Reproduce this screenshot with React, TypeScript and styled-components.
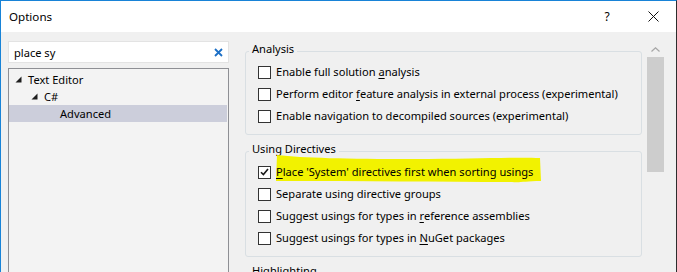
import styled, { createGlobalStyle } from 'styled-components';

const GlobalStyle = createGlobalStyle`
  html, body {
    margin: 0;
    padding: 0;
    background: #f0f0f0;
    overflow: hidden;
  }
  body {
    font-family: 'Segoe UI', 'Noto Sans', sans-serif;
    font-size: 11.1px;
    color: #000;
  }
`;

const Window = styled.div`
  width: 677px;
  height: 272px;
  box-sizing: border-box;
  border-left: 1px solid #1883d7;
  border-top: 1px solid #1883d7;
  border-right: 1px solid #2d2d2d;
  display: flex;
  flex-direction: column;
  overflow: hidden;
  background: #f0f0f0;
`;

const TitleBar = styled.div`
  height: 31px;
  flex: none;
  background: #fff;
  display: flex;
  align-items: center;
  padding-left: 8px;
`;

const Title = styled.span`
  flex: 1;
  line-height: 16px;
  font-size: 11.6px;
`;

const CaptionButton = styled.div`
  width: 46px;
  height: 31px;
  display: flex;
  align-items: center;
  justify-content: center;
  font-size: 12px;
`;

const Body = styled.div`
  flex: 1;
  display: flex;
  min-height: 0;
`;

const Sidebar = styled.div`
  width: 221px;
  margin-left: 7px;
  padding-top: 9px;
  display: flex;
  flex-direction: column;
`;

const SearchBox = styled.div`
  height: 22px;
  box-sizing: border-box;
  border: 1px solid #e3e3e3;
  background: #fff;
  display: flex;
  align-items: center;
  justify-content: space-between;
  padding: 0 5px 0 5px;
  flex: none;
`;

const Tree = styled.div`
  flex: 1;
  margin-top: 5px;
  border: 1px solid #8e8f94;
  border-bottom: none;
  background: #f3f3f3;
  padding-top: 2px;
`;

const TreeRow = styled.div<{ $level: number; $selected?: boolean }>`
  height: 17px;
  display: flex;
  align-items: center;
  margin-right: 1px;
  padding-left: ${(p) => 6 + p.$level * 16}px;
  background: ${(p) => (p.$selected ? '#cccedb' : 'transparent')};
`;

const Expander = styled.svg`
  width: 7px;
  height: 7px;
  margin-right: 6px;
  flex: none;
`;

const Content = styled.div`
  width: 397px;
  margin-left: 16px;
  padding-top: 9px;
  display: flex;
  flex-direction: column;
`;

const Group = styled.fieldset`
  margin: 0;
  padding: 0 12px 7px;
  border: 1px solid #d9dfe3;
  border-radius: 3px;
  min-inline-size: 0;
  & + & {
    margin-top: 6px;
  }
`;

const Legend = styled.legend`
  margin-left: -9px;
  padding: 0 3px 4px;
  line-height: 16px;
`;

const Option = styled.div`
  height: 22px;
  display: flex;
  align-items: center;
`;

const Checkbox = styled.span`
  width: 13px;
  height: 13px;
  box-sizing: border-box;
  border: 1px solid #333;
  background: #fff;
  flex: none;
  margin-right: 5px;
  display: flex;
  align-items: center;
  justify-content: center;
`;

const Label = styled.span`
  position: relative;
  line-height: 16px;
  white-space: nowrap;
`;

const LabelText = styled.span`
  position: relative;
`;

const Marker = styled.svg`
  position: absolute;
  left: -2px;
  top: -9px;
  width: 268px;
  height: 29px;
`;

const Key = styled.u`
  text-decoration-thickness: 1px;
  text-underline-offset: 2px;
`;

const Scrollbar = styled.div`
  width: 17px;
  margin-left: 5px;
  padding-top: 9px;
  display: flex;
  flex-direction: column;
`;

const ArrowButton = styled.div`
  height: 16px;
  display: flex;
  align-items: center;
  justify-content: center;
`;

const Thumb = styled.div`
  height: 115px;
  background: #cdcdcd;
`;

const Check = () => (
  <svg width="9" height="8" viewBox="0 0 9 8">
    <path d="M1 4.2 L3.4 6.6 L8 1" fill="none" stroke="#1a1a1a" strokeWidth="1.6" />
  </svg>
);

type OptionItem = { label: React.ReactNode; checked?: boolean; marked?: boolean };

const OptionRow = ({ label, checked, marked }: OptionItem) => (
  <Option>
    <Checkbox>{checked && <Check />}</Checkbox>
    <Label>
      {marked && (
        <Marker viewBox="0 0 268 29">
          <path
            d="M3 0 C30 3 70 4 140 4 C200 4 240 2 266 3 L267 26 C250 26 246 28 238 27 C170 27 90 26 2 26 Z"
            fill="#f2f200"
          />
        </Marker>
      )}
      <LabelText>{label}</LabelText>
    </Label>
  </Option>
);

const analysis: OptionItem[] = [
  { label: <>Enable full solution <Key>a</Key>nalysis</> },
  { label: <>Perform editor <Key>f</Key>eature analysis in external process (experimental)</> },
  { label: <>Enable navigation to decompiled sources (experimental)</> },
];

const usings: OptionItem[] = [
  { label: <><Key>P</Key>lace 'System' directives first when sorting usings</>, checked: true, marked: true },
  { label: <>Separate using directive groups</> },
  { label: <>Suggest usings for types in <Key>r</Key>eference assemblies</> },
  { label: <>Suggest usings for types in <Key>N</Key>uGet packages</> },
];

const ExpandedIcon = () => (
  <Expander viewBox="0 0 7 7">
    <polygon points="6.5,0.5 6.5,6.5 0.5,6.5" fill="#1e1e1e" />
  </Expander>
);

export default function App() {
  return (
    <>
      <GlobalStyle />
      <Window>
        <TitleBar>
          <Title>Options</Title>
          <CaptionButton>?</CaptionButton>
          <CaptionButton>
            <svg width="11" height="11" viewBox="0 0 11 11">
              <path d="M0.5 0.5 L10.5 10.5 M10.5 0.5 L0.5 10.5" stroke="#111" strokeWidth="1" />
            </svg>
          </CaptionButton>
        </TitleBar>
        <Body>
          <Sidebar>
            <SearchBox>
              <span>place sy</span>
              <svg width="9" height="9" viewBox="0 0 9 9">
                <path d="M1 1 L8 8 M8 1 L1 8" stroke="#1c6fc6" strokeWidth="1.8" />
              </svg>
            </SearchBox>
            <Tree>
              <TreeRow $level={0}>
                <ExpandedIcon />
                Text Editor
              </TreeRow>
              <TreeRow $level={1}>
                <ExpandedIcon />
                C#
              </TreeRow>
              <TreeRow $level={2} $selected>
                <span style={{ paddingLeft: 13 }}>Advanced</span>
              </TreeRow>
            </Tree>
          </Sidebar>
          <Content>
            <Group>
              <Legend>Analysis</Legend>
              {analysis.map((o, i) => (
                <OptionRow key={i} {...o} />
              ))}
            </Group>
            <Group>
              <Legend>Using Directives</Legend>
              {usings.map((o, i) => (
                <OptionRow key={i} {...o} />
              ))}
            </Group>
            <Group>
              <Legend>Highlighting</Legend>
              <Option />
            </Group>
          </Content>
          <Scrollbar>
            <ArrowButton>
              <svg width="9" height="5" viewBox="0 0 9 5">
                <path d="M0.5 4.5 L4.5 0.8 L8.5 4.5" fill="none" stroke="#a6a6a6" strokeWidth="1.2" />
              </svg>
            </ArrowButton>
            <Thumb />
          </Scrollbar>
        </Body>
      </Window>
    </>
  );
}
